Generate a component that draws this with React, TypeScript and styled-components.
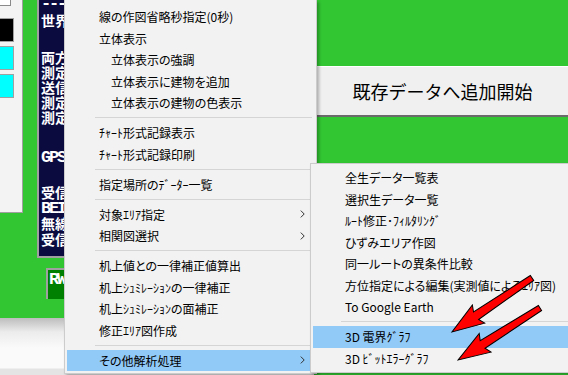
import React from 'react';
import styled, { createGlobalStyle } from 'styled-components';

const GlobalStyle = createGlobalStyle`
  html, body {
    margin: 0;
    padding: 0;
    overflow: hidden;
    background: #32c632;
  }
  body {
    font-family: "Noto Sans CJK JP", sans-serif;
  }
`;

type Entry = {
  text?: string;
  indent?: boolean;
  sub?: boolean;
  active?: boolean;
  sep?: boolean;
};

const SEP: Entry = { sep: true };

const mainItems: Entry[] = [
  { text: '線の作図省略秒指定(0秒)' },
  { text: '立体表示' },
  { text: '立体表示の強調', indent: true },
  { text: '立体表示に建物を追加', indent: true },
  { text: '立体表示の建物の色表示', indent: true },
  SEP,
  { text: 'ﾁｬｰﾄ形式記録表示' },
  { text: 'ﾁｬｰﾄ形式記録印刷' },
  SEP,
  { text: '指定場所のﾃﾞｰﾀｰ一覧' },
  SEP,
  { text: '対象ｴﾘｱ指定', sub: true },
  { text: '相関図選択', sub: true },
  SEP,
  { text: '机上値との一律補正値算出' },
  { text: '机上ｼｭﾐﾚｰｼｮﾝの一律補正' },
  { text: '机上ｼｭﾐﾚｰｼｮﾝの面補正' },
  { text: '修正ｴﾘｱ図作成' },
  SEP,
  { text: 'その他解析処理', sub: true, active: true },
];

const subItems: Entry[] = [
  { text: '全生データ一覧表' },
  { text: '選択生データ一覧' },
  { text: 'ﾙｰﾄ修正･ﾌｨﾙﾀﾘﾝｸﾞ' },
  { text: 'ひずみエリア作図' },
  { text: '同一ルートの異条件比較' },
  { text: '方位指定による編集(実測値によるｴﾘｱ図)' },
  { text: 'To Google Earth' },
  SEP,
  { text: '3D 電界ｸﾞﾗﾌ', active: true },
  { text: '3D ﾋﾞｯﾄｴﾗｰｸﾞﾗﾌ' },
];

// rows of the status display; latin rows use the narrow fixed font
const displayLines: { text: string; mt: number; latin?: boolean }[] = [
  { text: '-----', mt: -4, latin: true },
  { text: '世界測地系', mt: 2 },
  { text: '両方向', mt: 22 },
  { text: '測定開始', mt: 0 },
  { text: '送信停止', mt: 0 },
  { text: '測定中', mt: 0 },
  { text: '測定点', mt: 0 },
  { text: 'GPS', mt: 25, latin: true },
  { text: '受信状態', mt: 20 },
  { text: 'BEI', mt: 0.5, latin: true },
  { text: '無線状態', mt: 0.5 },
  { text: '受信中', mt: 0.5 },
];

const Chevron: React.FC = () => (
  <svg width="5" height="8" viewBox="0 0 5 8">
    <polyline points="0.8,0.6 4.2,4 0.8,7.4" fill="none" stroke="#333" strokeWidth="1" />
  </svg>
);

const MenuEntries: React.FC<{ items: Entry[] }> = ({ items }) => (
  <React.Fragment>
    {items.map((item, i) =>
      item.sep ? (
        <Separator key={i} />
      ) : (
        <Item key={i} $active={!!item.active} $indent={!!item.indent}>
          <span>{item.text}</span>
          {item.sub && <Chevron />}
        </Item>
      )
    )}
  </React.Fragment>
);

const Arrow: React.FC<{ x: number; y: number; length: number; angle: number }> = ({
  x,
  y,
  length,
  angle,
}) => {
  const L = length;
  const pts = [
    [0, -3],
    [L - 29, -4.5],
    [L - 32, -11],
    [L, 0],
    [L - 32, 11],
    [L - 29, 4.5],
    [0, 3],
  ]
    .map((p) => p.join(','))
    .join(' ');
  return (
    <polygon
      points={pts}
      transform={`translate(${x} ${y}) rotate(${angle})`}
      fill="#ff0000"
      stroke="#000"
      strokeWidth="1"
    />
  );
};

const App: React.FC = () => {
  return (
    <React.Fragment>
      <GlobalStyle />
      <Screen>
        <Desk>
          <LeftPane>
            <Upper>
              <ControlPanel>
                <TopBox />
                <Swatch $color="#000" $mt={12} />
                <Swatch $color="#00ffff" $mt={4} />
                <Swatch $color="#00ffff" $mt={4} />
              </ControlPanel>
              <DisplayColumn>
                <NavyPanel>
                  {displayLines.map((line, i) => (
                    <Line key={i} $mt={line.mt} $latin={!!line.latin}>
                      {line.text}
                    </Line>
                  ))}
                </NavyPanel>
                <RwBox>RW</RwBox>
              </DisplayColumn>
            </Upper>
            <BottomStrip />
          </LeftPane>
          <RightPane>
            <StartButton>既存データへ追加開始</StartButton>
          </RightPane>
        </Desk>

        <Menu $left={64} $top={0} $width={253} $main>
          <MenuEntries items={mainItems} />
        </Menu>
        <Menu $left={310} $top={163} $width={290}>
          <MenuEntries items={subItems} />
        </Menu>

        <Overlay width="568" height="375" viewBox="0 0 568 375">
          <Arrow x={532} y={278} length={96.5} angle={146} />
          <Arrow x={540} y={308} length={97} angle={147.6} />
        </Overlay>
      </Screen>
    </React.Fragment>
  );
};

const Screen = styled.div`
  position: relative;
  width: 568px;
  height: 375px;
  overflow: hidden;
  background: #32c632;
`;

const Desk = styled.div`
  display: flex;
  height: 100%;
`;

const LeftPane = styled.div`
  width: 317px;
  display: flex;
  flex-direction: column;
`;

const Upper = styled.div`
  height: 318px;
  display: flex;
  align-items: flex-start;
`;

const ControlPanel = styled.div`
  width: 23px;
  height: 213px;
  box-sizing: border-box;
  background: #f3f3f3;
  border-right: 1px solid #a0a0a0;
  border-bottom: 1px solid #a0a0a0;
  display: flex;
  flex-direction: column;
`;

const TopBox = styled.div`
  width: 10px;
  height: 5px;
  background: #fff;
  border: 1px solid #8a8a8a;
  border-top: none;
  border-left: none;
`;

const Swatch = styled.div<{ $color: string; $mt: number }>`
  width: 14px;
  height: 24px;
  margin-top: ${(p) => p.$mt}px;
  box-sizing: border-box;
  background: ${(p) => p.$color};
  border: 1px solid #a0a0a0;
  border-left: none;
`;

const DisplayColumn = styled.div`
  margin-left: 14px;
  display: flex;
  flex-direction: column;
`;

const NavyPanel = styled.div`
  width: 200px;
  height: 258px;
  box-sizing: border-box;
  background: #0b0b40;
  border-left: 2px solid #a0a0a0;
  border-bottom: 2px solid #a0a0a0;
  padding-left: 2px;
  overflow: hidden;
`;

const Line = styled.div<{ $mt: number; $latin: boolean }>`
  margin-top: ${(p) => p.$mt}px;
  height: 15px;
  line-height: 15px;
  font-family: ${(p) => (p.$latin ? '"Liberation Mono", monospace' : '"Noto Sans CJK JP", sans-serif')};
  font-weight: 700;
  font-size: ${(p) => (p.$latin ? 17 : 14)}px;
  letter-spacing: ${(p) => (p.$latin ? -2.2 : 0)}px;
  color: #fff;
  white-space: nowrap;
`;

const RwBox = styled.div`
  margin-top: 10px;
  margin-left: 9px;
  width: 120px;
  height: 31px;
  box-sizing: border-box;
  background: #008000;
  border-top: 2px solid #a0a0a0;
  border-left: 2px solid #a0a0a0;
  padding: 2px 0 0 1px;
  font-family: "Liberation Mono", monospace;
  font-weight: 700;
  font-size: 17px;
  letter-spacing: -2.2px;
  line-height: 16px;
  color: #fff;
`;

const BottomStrip = styled.div`
  flex: 1;
  background: linear-gradient(#bdbdbd 0px, #ececec 14px, #fafafa 30px, #fafafa 50px, #e4e4e4 51px);
`;

const RightPane = styled.div`
  flex: 1;
  padding: 66px 0 0 2px;
`;

const StartButton = styled.div`
  width: 252px;
  height: 51px;
  box-sizing: border-box;
  background: #f0f0f0;
  border-top: 1px solid #fff;
  border-left: 1px solid #fff;
  border-bottom: 2px solid #6a6a6a;
  display: flex;
  align-items: center;
  justify-content: center;
  font-family: "Noto Sans CJK JP", sans-serif;
  font-size: 18px;
  color: #000;
`;

const Menu = styled.div<{ $left: number; $top: number; $width: number; $main?: boolean }>`
  position: absolute;
  left: ${(p) => p.$left}px;
  top: ${(p) => p.$top}px;
  width: ${(p) => p.$width}px;
  box-sizing: border-box;
  background: #f2f2f2;
  border: 1px solid #cccccc;
  border-top: ${(p) => (p.$main ? 'none' : '1px solid #cccccc')};
  padding: ${(p) => (p.$main ? '6px 2px 2px' : '3px 2px 3px')};
  box-shadow: 2px 2px 3px rgba(0, 0, 0, 0.28);
`;

const Item = styled.div<{ $active: boolean; $indent: boolean }>`
  height: 21.5px;
  display: flex;
  align-items: center;
  padding-left: ${(p) => (p.$indent ? 44 : 32)}px;
  padding-right: 9px;
  background: ${(p) => (p.$active ? '#91c9f7' : 'transparent')};
  font-size: 12px;
  font-feature-settings: "palt";
  color: #000;
  white-space: nowrap;
  span {
    flex: 1;
  }
`;

const Separator = styled.div`
  height: 8.5px;
  margin: 0 2px 0 28px;
  display: flex;
  align-items: center;
  &::after {
    content: '';
    flex: 1;
    height: 1px;
    background: #d5d5d5;
  }
`;

const Overlay = styled.svg`
  position: absolute;
  left: 0;
  top: 0;
  pointer-events: none;
`;

export default App;
